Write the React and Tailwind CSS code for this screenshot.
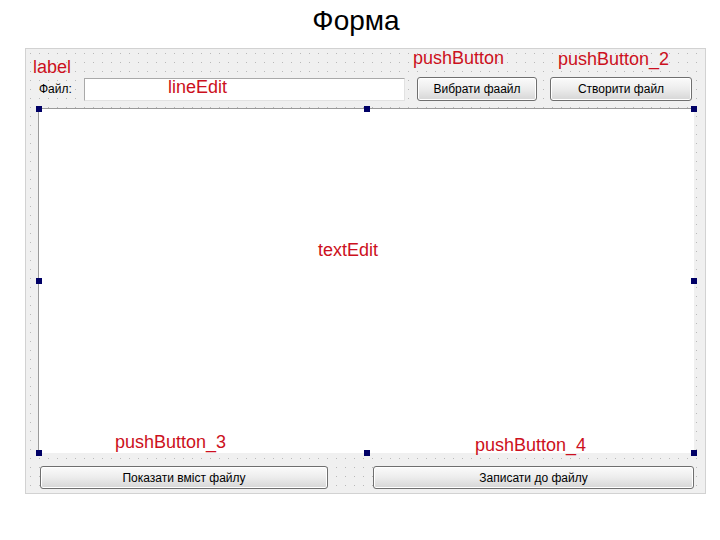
import React from 'react';

const btn =
  'flex items-center justify-center rounded-[3px] border border-[#6f6f6f] bg-gradient-to-b from-[#fbfbfb] via-[#ececec] to-[#d6d6d6] text-[12px] text-black shadow-[inset_0_0_0_1px_#ffffff]';

function Handle() {
  return <div className="h-[6px] w-[6px] bg-[#000066]"></div>;
}

function Tag({ className, children }) {
  return (
    <div className={`absolute text-[18px] leading-none text-[#cc1020] ${className}`}>{children}</div>
  );
}

export default function App() {
  return (
    <div className="relative h-[540px] w-[720px] overflow-hidden bg-white font-['Liberation_Sans',Arial,sans-serif]">
      <div className="flex h-[48px] items-start justify-center pt-[7px] pr-[8px] text-[28px] leading-none text-black">
        Форма
      </div>

      <div className="ml-[25px] h-[446px] w-[681px] border border-[#d2d2d2] bg-[#f0f0f0] bg-[radial-gradient(#b9b9b9_0.8px,transparent_0.8px)] bg-[size:9px_9px] pt-[28px] pl-[12px]">
        <div className="flex h-[24px] items-center">
          <div className="w-[46px] pl-[1px] text-[12px] text-black">Файл:</div>
          <div className="h-[23px] w-[321px] border border-[#a9a9a9] border-b-[#e2e2e2] border-r-[#e2e2e2] bg-white"></div>
          <div className={`${btn} ml-[12px] h-[24px] w-[120px]`}>Вибрати фаайл</div>
          <div className={`${btn} ml-[13px] h-[24px] w-[142px]`}>Створити файл</div>
        </div>

        <div className="relative mt-[7px] h-[345px] w-[656px] border-t border-l border-[#9a9a9a] bg-white">
          <div className="absolute -inset-[3px] flex flex-col justify-between">
            <div className="flex justify-between">
              <Handle />
              <Handle />
              <Handle />
            </div>
            <div className="flex justify-between">
              <Handle />
              <Handle />
            </div>
            <div className="flex justify-between">
              <Handle />
              <Handle />
              <Handle />
            </div>
          </div>
        </div>

        <div className="mt-[13px] flex h-[23px] gap-[45px] pl-[2px]">
          <div className={`${btn} h-[23px] w-[288px]`}>Показати вміст файлу</div>
          <div className={`${btn} h-[23px] w-[321px]`}>Записати до файлу</div>
        </div>
      </div>

      <Tag className="left-[33px] top-[58px]">label</Tag>
      <Tag className="left-[168px] top-[78px]">lineEdit</Tag>
      <Tag className="left-[413px] top-[49px]">pushButton</Tag>
      <Tag className="left-[558px] top-[50px]">pushButton_2</Tag>
      <Tag className="left-[318px] top-[241px]">textEdit</Tag>
      <Tag className="left-[115px] top-[433px]">pushButton_3</Tag>
      <Tag className="left-[475px] top-[436px]">pushButton_4</Tag>
    </div>
  );
}
